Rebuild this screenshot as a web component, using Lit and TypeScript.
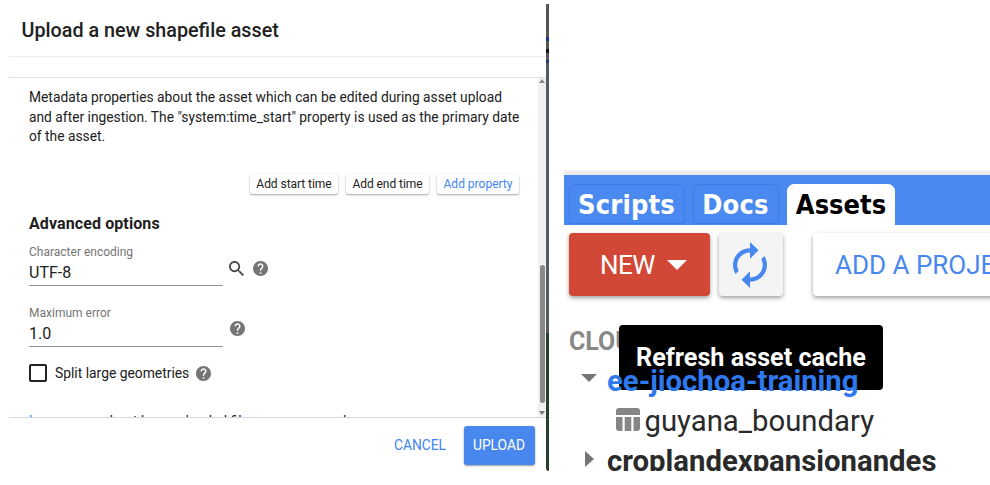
import { LitElement, html, css, svg } from "lit";
import { customElement } from "lit/decorators.js";

const helpIcon = html`<svg class="help" viewBox="2 2 20 20" aria-hidden="true">${svg`<path d="M12 2C6.48 2 2 6.48 2 12s4.48 10 10 10 10-4.48 10-10S17.52 2 12 2zm1 17h-2v-2h2v2zm2.07-7.75l-.9.92C13.45 12.9 13 13.5 13 15h-2v-.5c0-1.1.45-2.1 1.17-2.83l1.24-1.26c.37-.36.59-.86.59-1.41 0-1.1-.9-2-2-2s-2 .9-2 2H8c0-2.21 1.79-4 4-4s4 1.79 4 4c0 .88-.36 1.68-.93 2.25z"/>`}</svg>`;

@customElement("upload-dialog")
class UploadDialog extends LitElement {
  static styles = css`
    :host {
      display: flex;
      width: 540px;
      height: 467px;
      font-family: Roboto, "Liberation Sans", sans-serif;
      color: #212121;
    }
    .dialog {
      width: 537px;
      display: flex;
      flex-direction: column;
    }
    .edge {
      width: 3px;
      background: linear-gradient(#555 0 33px, #123b80 33px 37px, #555 37px 45px, #111 45px 49px, #555 49px 56px, #123b80 56px 59px, #565b62 59px 300px, #555a5c 300px 329px, #25402f 329px 100%);
      border-radius: 0 0 0 3px;
    }
    .title {
      box-sizing: border-box;
      height: 53px;
      padding: 14px 0 0 12.5px;
      border-bottom: 1px solid #eee;
      font-size: 19.75px;
      font-weight: 500;
      line-height: 25px;
      white-space: nowrap;
    }
    .gap { height: 20px; border-bottom: 1px solid #e0e0e0; }
    .scroll { height: 339px; display: flex; border-bottom: 1px solid #d8d8d8; }
    .content {
      flex: 1;
      padding-left: 20px;
      overflow: hidden;
      display: flex;
      flex-direction: column;
    }
    .para { height: 96px; flex: none; padding-top: 10px; box-sizing: border-box; font-size: 13.81px; line-height: 19.7px; white-space: nowrap; }
    .actions { display: flex; gap: 8px; justify-content: flex-end; padding-right: 19px; height: 39px; flex: none; }
    .chip {
      height: 20px;
      box-sizing: border-box;
      border-radius: 2px;
      line-height: 20px;
      font-size: 12px;
      letter-spacing: -0.05px;
      text-align: center;
      white-space: nowrap;
      box-shadow: 0 1px 2px rgba(0,0,0,.35), 0 0 1px rgba(0,0,0,.12);
    }
    .w1 { width: 88px; } .w2 { width: 83px; } .w3 { width: 82px; color: #4285f4; letter-spacing: 0; }
    h3 { margin: 0; height: 30px; flex: none; font-size: 16px; line-height: 22px; font-weight: 700; letter-spacing: 0.1px; }
    .row { display: flex; flex: none; }
    .field { width: 194px; height: 42px; border-bottom: 1px solid #949494; }
    .field.second { margin-top: 18px; }
    .label { font-size: 12px; line-height: 18px; color: #757575; }
    .value { font-size: 16px; line-height: 22px; padding-top: 1px; }
    .help { width: 15px; height: 15px; fill: #757575; }
    .search { width: 15px; height: 15px; fill: #444; margin: 18px 9px 0 5.500px; }
    .row .help { margin-top: 17.500px; }
    .row .only { display: flex; padding-left: 6.500px; padding-top: 35px; }
    .row .only .help { margin: 0; }
    .check { display: flex; align-items: center; height: 20px; flex: none; margin-top: 16px; font-size: 13.85px; }
    .box { width: 18px; height: 18px; box-sizing: border-box; border: 2px solid #222; border-radius: 2px; margin-right: 8px; }
    .check .help { margin-left: 7px; }
    .more { margin-top: 30px; height: 16px; line-height: 16px; font-size: 13.8px; white-space: nowrap; flex: none; }
    .more span { color: #4285f4; }
    .bar { width: 8px; background: #f1f1f1; display: flex; flex-direction: column; align-items: center; }
    .up, .down { border: 3px solid transparent; width: 0; height: 0; }
    .up { border-top: 0; border-bottom: 4px solid #888; margin-top: 1px; }
    .thumb { margin-top: 182px; width: 5px; height: 138px; border-radius: 3px; background: #888; }
    .down { border-bottom: 0; border-top: 4px solid #777; margin-top: 8px; }
    .footer { display: flex; justify-content: flex-end; padding: 8px 11.500px 0 0; font-size: 13.8px; line-height: 39px; color: #4285f4; }
    .upload {
      width: 71px;
      height: 39px;
      margin-left: 17.500px;
      border-radius: 3px;
      background: #4888ee;
      color: #fff;
      text-align: center;
      box-shadow: 0 1px 2px rgba(0,0,0,.4);
    }
  `;
  render() {
    return html`
      <div class="dialog">
        <div class="title">Upload a new shapefile asset</div>
        <div class="gap"></div>
        <div class="scroll">
          <div class="content">
            <div class="para">Metadata properties about the asset which can be edited during asset upload<br />and after ingestion. The "system:time_start" property is used as the primary date<br />of the asset.</div>
            <div class="actions">
              <div class="chip w1">Add start time</div>
              <div class="chip w2">Add end time</div>
              <div class="chip w3">Add property</div>
            </div>
            <h3>Advanced options</h3>
            <div class="row">
              <div class="field"><div class="label">Character encoding</div><div class="value">UTF-8</div></div>
              <svg class="search" viewBox="3 3 17.5 17.5" aria-hidden="true"><path d="M15.5 14h-.79l-.28-.27C15.41 12.59 16 11.11 16 9.5 16 5.91 13.09 3 9.5 3S3 5.91 3 9.5 5.91 16 9.5 16c1.61 0 3.09-.59 4.23-1.57l.27.28v.79l5 4.99L20.49 19l-4.99-5zm-6 0C7.01 14 5 11.99 5 9.5S7.01 5 9.5 5 14 7.01 14 9.5 11.99 14 9.5 14z"/></svg>
              ${helpIcon}
            </div>
            <div class="row">
              <div class="field second"><div class="label">Maximum error</div><div class="value">1.0</div></div>
              <div class="only">${helpIcon}</div>
            </div>
            <div class="check"><div class="box"></div><span>Split large geometries</span>${helpIcon}</div>
            <div class="more"><span>Learn more</span> about how uploaded files are processed.</div>
          </div>
          <div class="bar"><div class="up"></div><div class="thumb"></div><div class="down"></div></div>
        </div>
        <div class="footer"><span class="cancel">CANCEL</span><div class="upload">UPLOAD</div></div>
      </div>
      <div class="edge"></div>
    `;
  }
}

@customElement("asset-panel")
class AssetPanel extends LitElement {
  static styles = css`
    :host {
      display: block;
      position: relative;
      width: 426px;
      height: 301px;
      overflow: hidden;
      font-family: Roboto, "Liberation Sans", sans-serif;
      color: #2a2a2a;
      white-space: nowrap;
    }
    .strip { height: 5px; background: linear-gradient(#f3f3f3, #e6e6e6); }
    .tabs {
      height: 50px;
      box-sizing: border-box;
      padding: 9px 0 0 5px;
      display: flex;
      gap: 8px;
      background: #4a8af0;
      font: 700 27px "DejaVu Sans Condensed", "DejaVu Sans", sans-serif;
      font-stretch: condensed;
    }
    .tab {
      box-sizing: border-box;
      height: 40px;
      border: 1px solid #3a7ceb;
      border-radius: 7px 7px 0 0;
      color: #fff;
      line-height: 40px;
      text-align: center;
    }
    .scripts { width: 116px; padding-right: 1px; letter-spacing: 0.2px; } .docs { width: 86px; padding-right: 1px; letter-spacing: 0.2px; }
    .assets { width: 108px; height: 41px; background: #fff; color: #000; border-color: #fff; }
    .buttons { display: flex; padding: 8px 0 0 5px; font-size: 26px; line-height: 64px; }
    .btn { height: 63px; border-radius: 4px; box-shadow: 0 2px 4px rgba(0,0,0,.38); flex: none; box-sizing: border-box; }
    .new { width: 141px; background: #d14836; color: #fff; padding-left: 31px; display: flex; align-items: center; letter-spacing: -0.5px; }
    .caret { border: 10px solid transparent; border-top-color: #fff; border-bottom: 0; margin-left: 12px; }
    .refresh { width: 64px; margin-left: 9px; background: #f4f4f4; display: flex; justify-content: center; align-items: center; }
    .refresh svg { width: 34px; height: 46px; fill: #4888ee; margin-right: 2px; }
    .add { width: 200px; margin-left: 30px; padding-left: 22px; color: #4888ee; }
    .heading { margin-top: 32px; padding-left: 5px; height: 28px; line-height: 28px; font-size: 25px; font-weight: 700; color: #888; }
    .node { display: flex; align-items: center; height: 40px; font-size: 29.3px; line-height: 40px; }
    .first { margin-top: 5px; }
    .open { border: 8px solid transparent; border-top-color: #757575; border-bottom: 0; margin: -7px 0 0 16.500px; }
    .closed { border: 8px solid transparent; border-left: 9px solid #757575; border-right: 0; margin: -4px 0 0 21px; }
    .project { font-weight: 700; }
    .blue { color: #2f79ee; margin-left: 10.500px; position: relative; z-index: 2; }
    .dark { margin-left: 13px; }
    .leaf { padding-left: 52px; }
    .leaf svg { width: 24px; height: 23px; fill: #858585; margin: -3px 4.500px 0 0; }
    .tip {
      position: absolute;
      left: 55px;
      top: 155px;
      width: 264px;
      height: 65px;
      box-sizing: border-box;
      border-radius: 4px;
      background: #000;
      color: #fff;
      font-size: 25.2px;
      font-weight: 700;
      line-height: 65px;
      text-align: center;
      z-index: 1;
    }
  `;
  render() {
    return html`
      <div class="strip"></div>
      <div class="tabs"><div class="tab scripts">Scripts</div><div class="tab docs">Docs</div><div class="tab assets">Assets</div></div>
      <div class="buttons">
        <div class="btn new"><span>NEW</span><i class="caret"></i></div>
        <div class="btn refresh"><svg viewBox="4 1 16 22" preserveAspectRatio="none" aria-hidden="true"><path d="M12 6v3l4-4-4-4v3c-4.42 0-8 3.58-8 8 0 1.57.46 3.03 1.24 4.26L6.7 14.8c-.45-.83-.7-1.79-.7-2.8 0-3.31 2.69-6 6-6zm6.76 1.74L17.3 9.2c.44.84.7 1.79.7 2.8 0 3.31-2.69 6-6 6v-3l-4 4 4 4v-3c4.42 0 8-3.58 8-8 0-1.57-.46-3.03-1.24-4.26z"/></svg></div>
        <div class="btn add">ADD A PROJECT</div>
      </div>
      <div class="heading">CLOUD ASSETS</div>
      <div class="tip">Refresh asset cache</div>
      <div class="node first"><i class="open"></i><span class="project blue">ee-jiochoa-training</span></div>
      <div class="node leaf"><svg viewBox="0 0 24 23" aria-hidden="true"><path d="M3 0h18q3 0 3 3v4H0V3q0-3 3-3zM0 9h6.500v14H3q-3 0-3-3zM8.700 9h6.600v14H8.700zM17.500 9H24v11q0 3-3 3h-3.500z"/></svg><span class="name">guyana_boundary</span></div>
      <div class="node"><i class="closed"></i><span class="project dark">croplandexpansionandes</span></div>
    `;
  }
}

@customElement("app-root")
class AppRoot extends LitElement {
  static styles = css`
    :host {
      display: flex;
      align-items: flex-end;
      gap: 15px;
      box-sizing: border-box;
      width: 990px;
      height: 485px;
      padding: 0 0 14px 9px;
      background: #fff;
      overflow: hidden;
    }
  `;
  render() {
    return html`<upload-dialog></upload-dialog><asset-panel></asset-panel>`;
  }
}
